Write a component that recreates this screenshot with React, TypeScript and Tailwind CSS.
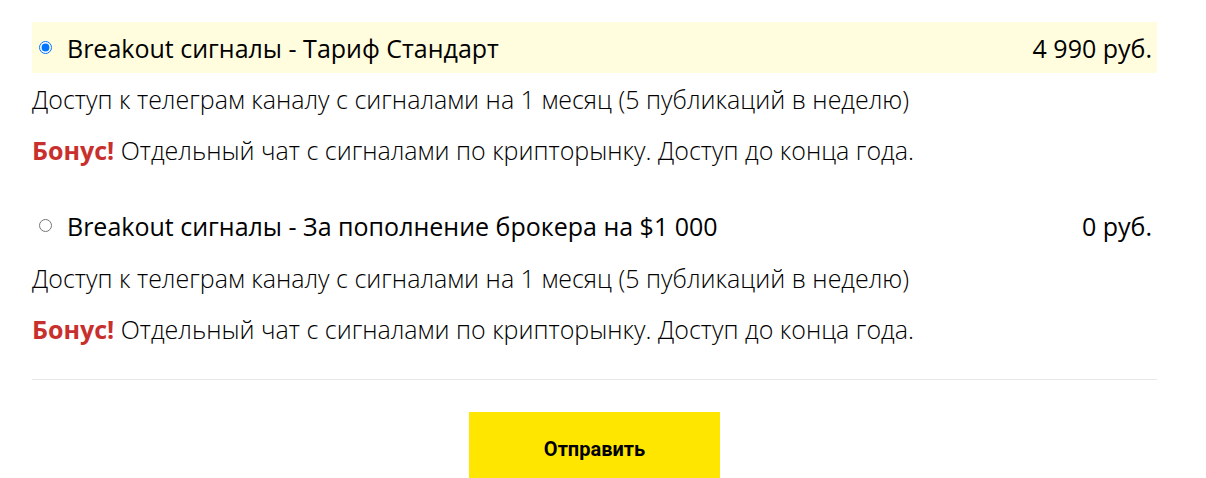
import { useState } from 'react';

interface Plan {
  id: string;
  title: string;
  price: string;
}

const PLANS: Plan[] = [
  { id: 'standard', title: 'Breakout сигналы - Тариф Стандарт', price: '4 990 руб.' },
  { id: 'broker', title: 'Breakout сигналы - За пополнение брокера на $1 000', price: '0 руб.' },
];

export default function App() {
  const [selected, setSelected] = useState('standard');

  return (
    <div className="w-[1206px] h-[478px] overflow-hidden bg-white pt-[22px] font-['Open_Sans',sans-serif] text-[#111]">
      <form className="ml-[32px] w-[1125px] flex flex-col" onSubmit={(e) => e.preventDefault()}>
        {PLANS.map((plan, i) => {
          const isSelected = selected === plan.id;
          return (
            <div key={plan.id} className={i === 0 ? '' : 'mt-[35px]'}>
              {/* Строка тарифа */}
              <label
                className={`h-[51px] flex items-center pl-[7px] pr-[5px] cursor-pointer ${
                  isSelected ? 'bg-[#fffddd]' : ''
                }`}
              >
                <input
                  type="radio"
                  name="plan"
                  checked={isSelected}
                  onChange={() => setSelected(plan.id)}
                  className="m-0 w-[13px] h-[13px] accent-[#0075ff]"
                />
                <span className="ml-[15px] text-[25px] leading-[30px] text-black">{plan.title}</span>
                <span className="ml-auto text-[25px] leading-[30px] text-black">{plan.price}</span>
              </label>
              <p
                className={`${i === 0 ? 'mt-[11px]' : 'mt-[12px]'} text-[25px] font-light leading-[30px] text-black`}
              >
                Доступ к телеграм каналу с сигналами на 1 месяц (5 публикаций в неделю)
              </p>
              <p className="mt-[21px] text-[25px] font-light leading-[30px] text-black">
                <strong className="font-bold text-[#c8302d]">Бонус!</strong> Отдельный чат с сигналами
                по крипторынку. Доступ до конца года.
              </p>
            </div>
          );
        })}

        <div className="mt-[35px] h-px bg-[#e8e8e8]" />

        <div className="mt-[32px] flex justify-center">
          <button
            type="submit"
            className="w-[251px] h-[74px] bg-[#ffe600] font-['Roboto',sans-serif] font-bold text-[20px] text-black"
          >
            Отправить
          </button>
        </div>
      </form>
    </div>
  );
}
